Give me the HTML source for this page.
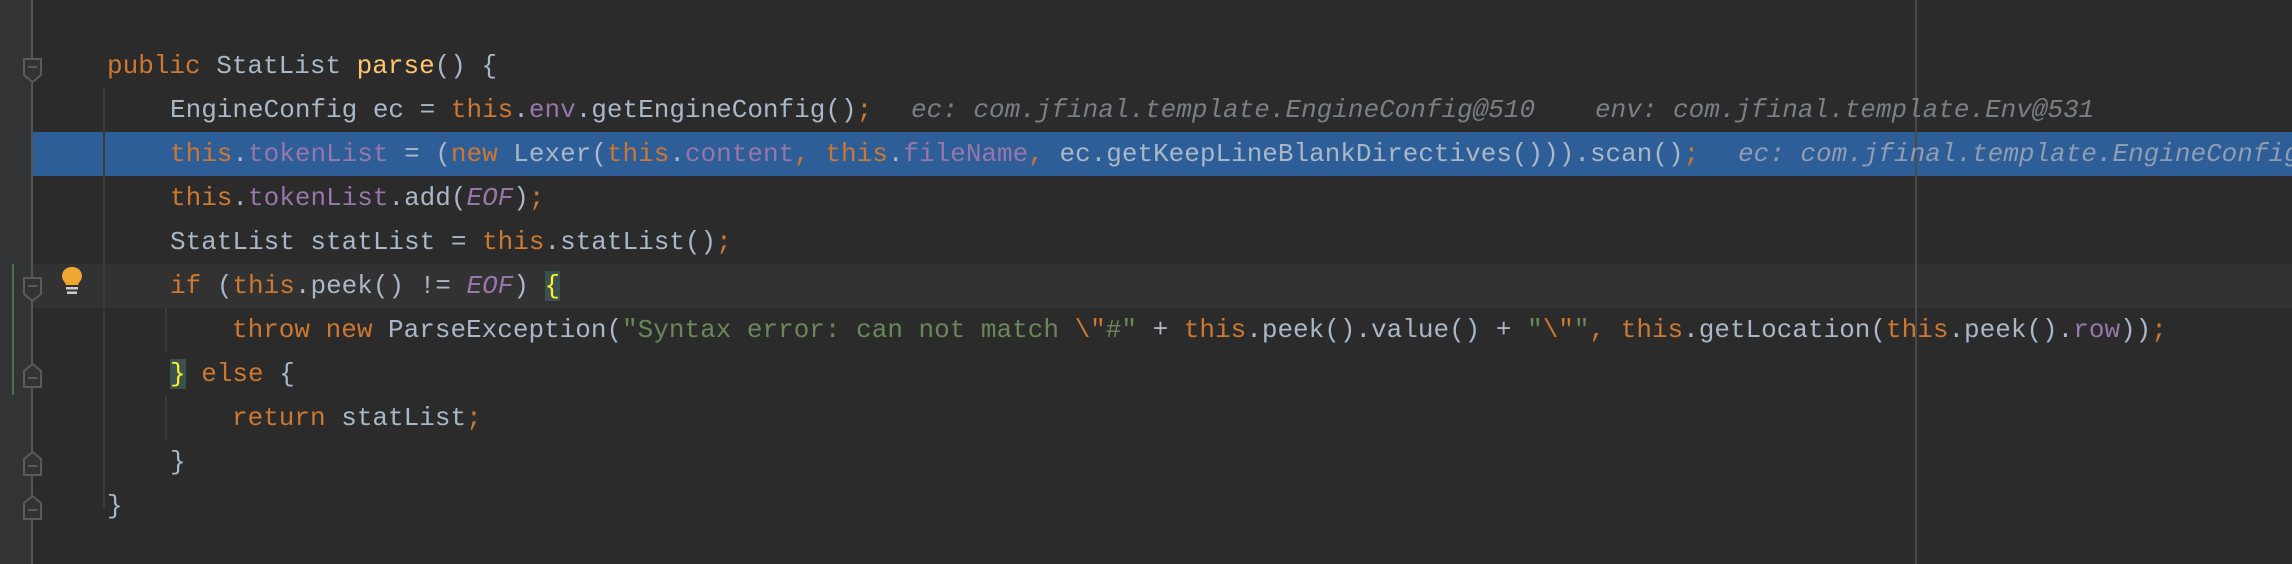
<!DOCTYPE html>
<html><head><meta charset="utf-8"><style>
body{margin:0;width:2292px;height:564px;background:#2b2b2b;overflow:hidden;position:relative;font-family:"Liberation Mono",monospace;font-size:26px;}
.g{position:absolute;left:0;top:0;width:31px;height:564px;background:#313335;}
.gl{position:absolute;left:31px;top:0;width:2px;height:564px;background:#555;}
.row{position:absolute;left:33px;width:2259px;height:44px;}
.l{position:absolute;height:44px;line-height:44px;white-space:pre;color:#a9b7c6;}
.k{color:#cc7832}.f{color:#9876aa}.m{color:#ffc66d}.s{color:#6a8759}.i{color:#9876aa;font-style:italic}
.h{position:absolute;height:44px;line-height:44px;white-space:pre;color:#7a7e85;font-style:italic;}
.br{background:#3b514d;color:#ffef28}
.guide{position:absolute;width:2px;background:#3a3a3a;}
.fold{position:absolute;left:23px;}
</style></head><body>
<div class="g"></div>
<div class="gl"></div>
<div class="row" style="top:132px;background:#2d5e98"></div>
<div class="row" style="top:264px;background:#323232"></div>
<div style="position:absolute;left:1915px;top:0;width:2px;height:564px;background:#4a4a4a"></div>
<div class="guide" style="left:103px;top:88px;height:420px"></div>
<div class="guide" style="left:165px;top:308px;height:44px"></div>
<div class="guide" style="left:165px;top:396px;height:44px"></div>
<div style="position:absolute;left:12px;top:264px;width:2px;height:131px;background:#447152"></div>

<svg class="fold" style="top:58px" width="20" height="26"><path d="M1 1H18V17L9.5 24L1 17Z" fill="#313335" stroke="#5a5a5a" stroke-width="2"/><path d="M5 9H14" stroke="#5a5a5a" stroke-width="2"/></svg>
<svg class="fold" style="top:277px" width="20" height="26"><path d="M1 1H18V17L9.5 24L1 17Z" fill="#313335" stroke="#5a5a5a" stroke-width="2"/><path d="M5 9H14" stroke="#5a5a5a" stroke-width="2"/></svg>
<svg class="fold" style="top:362px" width="20" height="26"><path d="M1 25H18V9L9.5 2L1 9Z" fill="#313335" stroke="#5a5a5a" stroke-width="2"/><path d="M5 16H14" stroke="#5a5a5a" stroke-width="2"/></svg>
<svg class="fold" style="top:450px" width="20" height="26"><path d="M1 25H18V9L9.5 2L1 9Z" fill="#313335" stroke="#5a5a5a" stroke-width="2"/><path d="M5 16H14" stroke="#5a5a5a" stroke-width="2"/></svg>
<svg class="fold" style="top:494px" width="20" height="26"><path d="M1 25H18V9L9.5 2L1 9Z" fill="#313335" stroke="#5a5a5a" stroke-width="2"/><path d="M5 16H14" stroke="#5a5a5a" stroke-width="2"/></svg>
<svg style="position:absolute;left:61px;top:266px" width="22" height="30"><path d="M11 1C5 1 1 5 1 10C1 14 4 16 5 19H17C18 16 21 14 21 10C21 5 17 1 11 1Z" fill="#f0a732"/><rect x="5" y="21" width="12" height="2.5" fill="#ccc"/><rect x="6" y="25.5" width="10" height="2.5" fill="#ccc"/></svg>

<div class="l" style="left:107px;top:44px"><span class="k">public</span> StatList <span class="m">parse</span>() {</div>
<div class="l" style="left:170px;top:88px">EngineConfig ec = <span class="k">this</span>.<span class="f">env</span>.getEngineConfig()<span class="k">;</span></div>
<div class="h" style="left:911px;top:88px">ec: com.jfinal.template.EngineConfig@510</div>
<div class="h" style="left:1595px;top:88px">env: com.jfinal.template.Env@531</div>
<div class="l" style="left:170px;top:132px"><span class="k">this</span>.<span class="f">tokenList</span> = (<span class="k">new</span> Lexer(<span class="k">this</span>.<span class="f">content</span><span class="k">,</span> <span class="k">this</span>.<span class="f">fileName</span><span class="k">,</span> ec.getKeepLineBlankDirectives())).scan()<span class="k">;</span></div>
<div class="h" style="left:1738px;top:132px;color:#8e9db3">ec: com.jfinal.template.EngineConfig@510</div>
<div class="l" style="left:170px;top:176px"><span class="k">this</span>.<span class="f">tokenList</span>.add(<span class="i">EOF</span>)<span class="k">;</span></div>
<div class="l" style="left:170px;top:220px">StatList statList = <span class="k">this</span>.statList()<span class="k">;</span></div>
<div class="l" style="left:170px;top:264px"><span class="k">if</span> (<span class="k">this</span>.peek() != <span class="i">EOF</span>) <span class="br">{</span></div>
<div class="l" style="left:232px;top:308px"><span class="k">throw new</span> ParseException(<span class="s">"Syntax error: can not match </span><span class="k">\"</span><span class="s">#"</span> + <span class="k">this</span>.peek().value() + <span class="s">"</span><span class="k">\"</span><span class="s">"</span><span class="k">,</span> <span class="k">this</span>.getLocation(<span class="k">this</span>.peek().<span class="f">row</span>))<span class="k">;</span></div>
<div class="l" style="left:170px;top:352px"><span class="br">}</span> <span class="k">else</span> {</div>
<div class="l" style="left:232px;top:396px"><span class="k">return</span> statList<span class="k">;</span></div>
<div class="l" style="left:170px;top:440px">}</div>
<div class="l" style="left:107px;top:484px">}</div>
</body></html>
